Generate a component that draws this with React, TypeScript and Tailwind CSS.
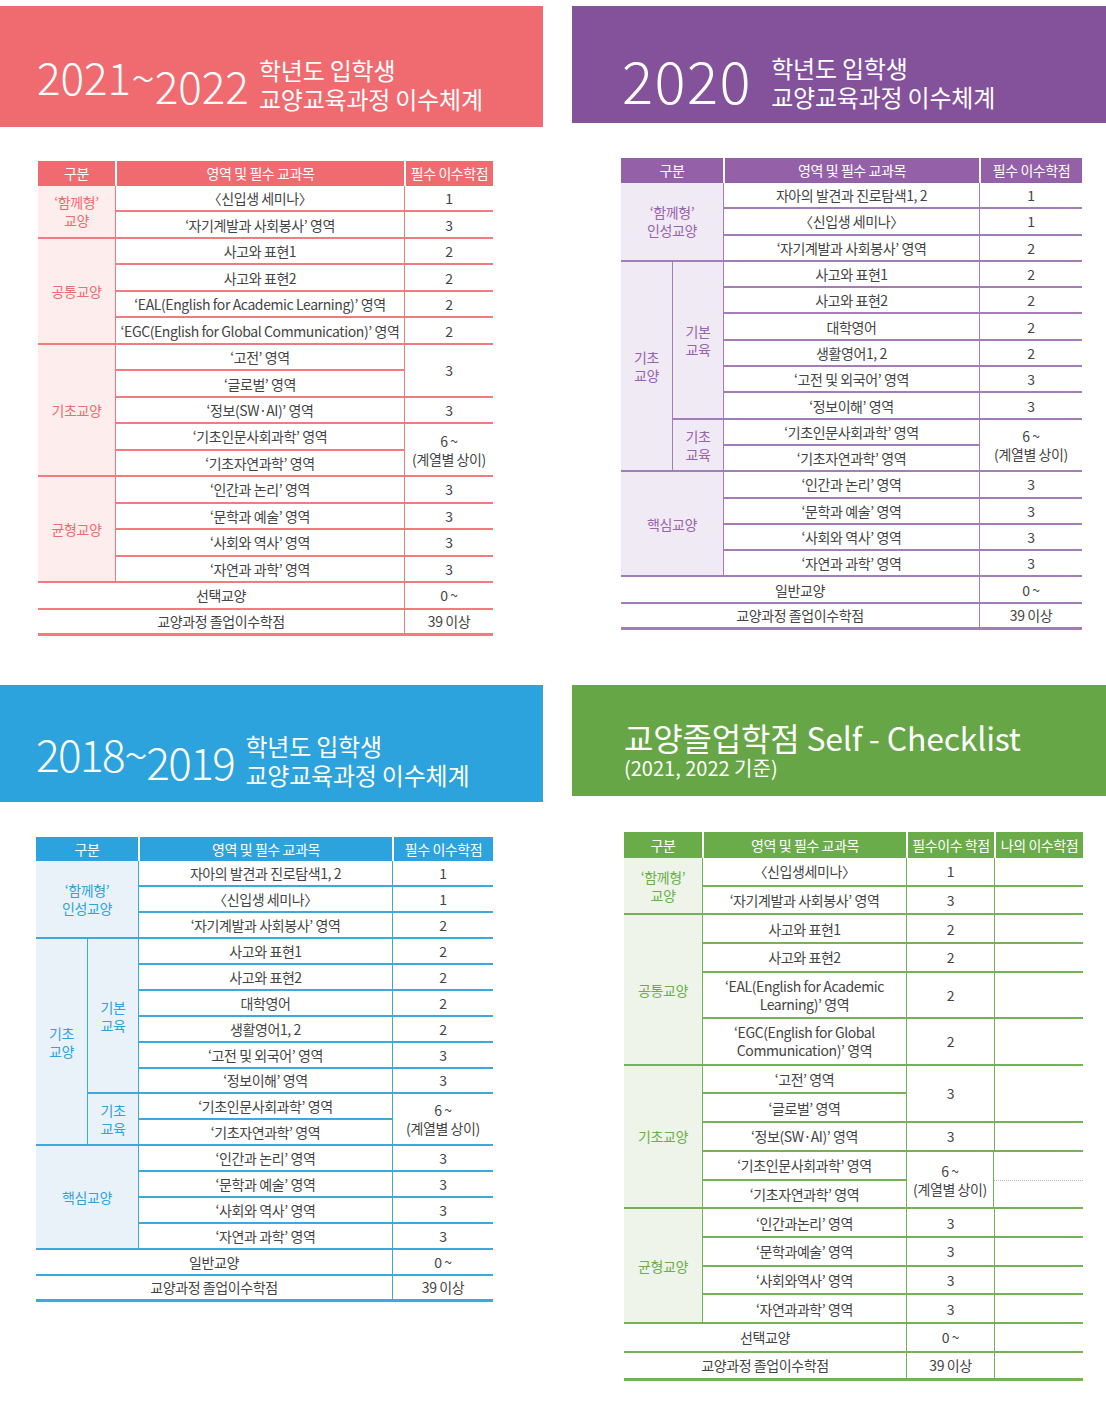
import React from "react";

type C = {
  t: string;
  rs?: number;
  cs?: number;
  cat?: boolean;
  nl?: boolean;
  last?: boolean;
  dot?: boolean;
  r?: boolean;
};
type Row = { h?: string; cells: C[] };
type Theme = { head: string; border: string; tint: string; cat: string };

const red: Theme = {
  head: "bg-[#f06b6f]",
  border: "border-[#f37a7d]",
  tint: "bg-[#fdeeed]",
  cat: "text-[#f06b6f]",
};
const purple: Theme = {
  head: "bg-[#9461a8]",
  border: "border-[#a47cb8]",
  tint: "bg-[#f0eaf4]",
  cat: "text-[#9a63ae]",
};
const blue: Theme = {
  head: "bg-[#2ca3dc]",
  border: "border-[#3aa9de]",
  tint: "bg-[#e9f2f9]",
  cat: "text-[#2ea4dc]",
};
const green: Theme = {
  head: "bg-[#6aab4a]",
  border: "border-[#74b255]",
  tint: "bg-[#eef4e9]",
  cat: "text-[#6cae4c]",
};

function DataTable({
  theme,
  cols,
  head,
  rows,
  headH,
  rowH,
  className,
}: {
  theme: Theme;
  cols: string[];
  head: C[];
  rows: Row[];
  headH: string;
  rowH: string;
  className: string;
}) {
  return (
    <table className={"table-fixed border-separate border-spacing-0 text-[14px] tracking-[-0.4px] " + className}>
      <colgroup>
        {cols.map((c, i) => (
          <col key={i} className={c} />
        ))}
      </colgroup>
      <thead>
        <tr className={headH}>
          {head.map((c, i) => (
            <th
              key={i}
              colSpan={c.cs}
              className={
                "p-0 font-normal text-white text-center align-middle whitespace-nowrap " +
                theme.head +
                (i > 0 ? " border-l-2 border-white" : "")
              }
            >
              {c.t}
            </th>
          ))}
        </tr>
      </thead>
      <tbody>
        {rows.map((row, ri) => (
          <tr key={ri} className={row.h ?? rowH}>
            {row.cells.map((c, ci) => {
              const cls = [
                "p-0 text-center align-middle whitespace-pre-line leading-[18px]",
                c.dot
                  ? "border-b border-dotted border-[#b8b8b8]"
                  : (c.last ? "border-b-[3px] " : "border-b-2 ") + theme.border,
                c.nl || c.dot ? "" : "border-l",
                c.r ? "border-r" : "",
                c.cat ? theme.tint + " " + theme.cat : "text-[#444]",
              ].join(" ");
              return (
                <td key={ci} rowSpan={c.rs} colSpan={c.cs} className={cls}>
                  {c.t}
                </td>
              );
            })}
          </tr>
        ))}
      </tbody>
    </table>
  );
}

const r = (...cells: C[]): Row => ({ cells });

const redRows: Row[] = [
  r({ t: "‘함께형’\n교양", rs: 2, cat: true, nl: true }, { t: "〈신입생 세미나〉" }, { t: "1" }),
  r({ t: "‘자기계발과 사회봉사’ 영역" }, { t: "3" }),
  r({ t: "공통교양", rs: 4, cat: true, nl: true }, { t: "사고와 표현1" }, { t: "2" }),
  r({ t: "사고와 표현2" }, { t: "2" }),
  r({ t: "‘EAL(English for Academic Learning)’ 영역" }, { t: "2" }),
  r({ t: "‘EGC(English for Global Communication)’ 영역" }, { t: "2" }),
  r({ t: "기초교양", rs: 5, cat: true, nl: true }, { t: "‘고전’ 영역" }, { t: "3", rs: 2 }),
  r({ t: "‘글로벌’ 영역" }),
  r({ t: "‘정보(SW·AI)’ 영역" }, { t: "3" }),
  r({ t: "‘기초인문사회과학’ 영역" }, { t: "6 ~\n(계열별 상이)", rs: 2 }),
  r({ t: "‘기초자연과학’ 영역" }),
  r({ t: "균형교양", rs: 4, cat: true, nl: true }, { t: "‘인간과 논리’ 영역" }, { t: "3" }),
  r({ t: "‘문학과 예술’ 영역" }, { t: "3" }),
  r({ t: "‘사회와 역사’ 영역" }, { t: "3" }),
  r({ t: "‘자연과 과학’ 영역" }, { t: "3" }),
  r({ t: "선택교양", cs: 2, nl: true }, { t: "0 ~" }),
  r({ t: "교양과정 졸업이수학점", cs: 2, nl: true, last: true }, { t: "39 이상", last: true }),
];

const oldRows: Row[] = [
  r({ t: "‘함께형’\n인성교양", rs: 3, cs: 2, cat: true, nl: true }, { t: "자아의 발견과 진로탐색1, 2" }, { t: "1" }),
  r({ t: "〈신입생 세미나〉" }, { t: "1" }),
  r({ t: "‘자기계발과 사회봉사’ 영역" }, { t: "2" }),
  r(
    { t: "기초\n교양", rs: 8, cat: true, nl: true },
    { t: "기본\n교육", rs: 6, cat: true },
    { t: "사고와 표현1" },
    { t: "2" }
  ),
  r({ t: "사고와 표현2" }, { t: "2" }),
  r({ t: "대학영어" }, { t: "2" }),
  r({ t: "생활영어1, 2" }, { t: "2" }),
  r({ t: "‘고전 및 외국어’ 영역" }, { t: "3" }),
  r({ t: "‘정보이해’ 영역" }, { t: "3" }),
  r({ t: "기초\n교육", rs: 2, cat: true }, { t: "‘기초인문사회과학’ 영역" }, { t: "6 ~\n(계열별 상이)", rs: 2 }),
  r({ t: "‘기초자연과학’ 영역" }),
  r({ t: "핵심교양", rs: 4, cs: 2, cat: true, nl: true }, { t: "‘인간과 논리’ 영역" }, { t: "3" }),
  r({ t: "‘문학과 예술’ 영역" }, { t: "3" }),
  r({ t: "‘사회와 역사’ 영역" }, { t: "3" }),
  r({ t: "‘자연과 과학’ 영역" }, { t: "3" }),
  r({ t: "일반교양", cs: 3, nl: true }, { t: "0 ~" }),
  r({ t: "교양과정 졸업이수학점", cs: 3, nl: true, last: true }, { t: "39 이상", last: true }),
];

const greenRows: Row[] = [
  r({ t: "‘함께형’\n교양", rs: 2, cat: true, nl: true }, { t: "〈신입생세미나〉" }, { t: "1" }, { t: "" }),
  r({ t: "‘자기계발과 사회봉사’ 영역" }, { t: "3" }, { t: "" }),
  r({ t: "공통교양", rs: 4, cat: true, nl: true }, { t: "사고와 표현1" }, { t: "2" }, { t: "" }),
  r({ t: "사고와 표현2" }, { t: "2" }, { t: "" }),
  { h: "h-[46px]", cells: [{ t: "‘EAL(English for Academic\nLearning)’ 영역" }, { t: "2" }, { t: "" }] },
  { h: "h-[47px]", cells: [{ t: "‘EGC(English for Global\nCommunication)’ 영역" }, { t: "2" }, { t: "" }] },
  r({ t: "기초교양", rs: 5, cat: true, nl: true }, { t: "‘고전’ 영역" }, { t: "3", rs: 2 }, { t: "", rs: 2 }),
  r({ t: "‘글로벌’ 영역" }),
  r({ t: "‘정보(SW·AI)’ 영역" }, { t: "3" }, { t: "" }),
  r({ t: "‘기초인문사회과학’ 영역" }, { t: "6 ~\n(계열별 상이)", rs: 2, r: true }, { t: "", dot: true }),
  r({ t: "‘기초자연과학’ 영역" }, { t: "", nl: true }),
  r({ t: "균형교양", rs: 4, cat: true, nl: true }, { t: "‘인간과논리’ 영역" }, { t: "3" }, { t: "" }),
  r({ t: "‘문학과예술’ 영역" }, { t: "3" }, { t: "" }),
  r({ t: "‘사회와역사’ 영역" }, { t: "3" }, { t: "" }),
  r({ t: "‘자연과과학’ 영역" }, { t: "3" }, { t: "" }),
  r({ t: "선택교양", cs: 2, nl: true }, { t: "0 ~" }, { t: "" }),
  r({ t: "교양과정 졸업이수학점", cs: 2, nl: true, last: true }, { t: "39 이상", last: true }, { t: "", last: true }),
];

function YearHeader({
  bg,
  h,
  big,
  ml,
}: {
  bg: string;
  h: string;
  big: React.ReactNode;
  ml: string;
}) {
  return (
    <div className={"flex items-end text-white " + bg + " " + h}>
      {big}
      <div className={"whitespace-pre-line text-[24px] leading-[29px] tracking-[-0.2px] " + ml}>
        {"학년도 입학생\n교양교육과정 이수체계"}
      </div>
    </div>
  );
}

export default function App() {
  return (
    <div className="w-[1106px] h-[1412px] bg-white pt-[6px] font-['Noto_Sans_CJK_KR','Noto_Sans',sans-serif] text-[#444]">
      <div className="grid grid-cols-[543px_534px] gap-x-[29px]">
        {/* red */}
        <div className="h-[679px]">
          <YearHeader
            bg="bg-[#f06b6f]"
            h="h-[121px] pb-[14px] pl-[37px]"
            ml="ml-[10px]"
            big={
              <div className="mb-[6px] text-[44px] leading-[44px] tracking-[0px] font-light whitespace-nowrap">
                <span className="align-[9px]">2021~</span>
                <span>2022</span>
              </div>
            }
          />
          <DataTable
            theme={red}
            className="mt-[34px] ml-[38px] w-[455px]"
            cols={["w-[77px]", "w-[289px]", "w-[89px]"]}
            head={[{ t: "구분" }, { t: "영역 및 필수 교과목" }, { t: "필수 이수학점" }]}
            rows={redRows}
            headH="h-[25px]"
            rowH="h-[26.47px]"
          />
        </div>
        {/* purple */}
        <div className="h-[679px]">
          <YearHeader
            bg="bg-[#84529b]"
            h="h-[117px] pb-[12px] pl-[50px]"
            ml="ml-[19px]"
            big={
              <div className="mb-[3px] text-[58px] leading-[58px] tracking-[1.5px] font-light">2020</div>
            }
          />
          <DataTable
            theme={purple}
            className="mt-[35px] ml-[49px] w-[461px]"
            cols={["w-[51px]", "w-[51px]", "w-[256px]", "w-[103px]"]}
            head={[{ t: "구분", cs: 2 }, { t: "영역 및 필수 교과목" }, { t: "필수 이수학점" }]}
            rows={oldRows}
            headH="h-[25px]"
            rowH="h-[26.3px]"
          />
        </div>
        {/* blue */}
        <div>
          <YearHeader
            bg="bg-[#2ca3dc]"
            h="h-[117px] pb-[13px] pl-[36px]"
            ml="ml-[11px]"
            big={
              <div className="mb-[6px] text-[44px] leading-[44px] tracking-[-1.5px] font-light whitespace-nowrap">
                <span className="align-[8px]">2018~</span>
                <span>2019</span>
              </div>
            }
          />
          <DataTable
            theme={blue}
            className="mt-[35px] ml-[36px] w-[457px]"
            cols={["w-[51px]", "w-[51px]", "w-[254px]", "w-[101px]"]}
            head={[{ t: "구분", cs: 2 }, { t: "영역 및 필수 교과목" }, { t: "필수 이수학점" }]}
            rows={oldRows}
            headH="h-[24px]"
            rowH="h-[25.95px]"
          />
        </div>
        {/* green */}
        <div>
          <div className="h-[111px] bg-[#67a646] text-white pl-[52px] pt-[40px]">
            <div className="text-[32px] leading-[25px] tracking-[-0.2px]">
              교양졸업학점 Self - Checklist
              <br />
              <span className="text-[20px] tracking-[0px]">(2021, 2022 기준)</span>
            </div>
          </div>
          <DataTable
            theme={green}
            className="mt-[36px] ml-[52px] w-[459px]"
            cols={["w-[78px]", "w-[204px]", "w-[88px]", "w-[89px]"]}
            head={[{ t: "구분" }, { t: "영역 및 필수 교과목" }, { t: "필수이수 학점" }, { t: "나의 이수학점" }]}
            rows={greenRows}
            headH="h-[26px]"
            rowH="h-[28.7px]"
          />
        </div>
      </div>
    </div>
  );
}
